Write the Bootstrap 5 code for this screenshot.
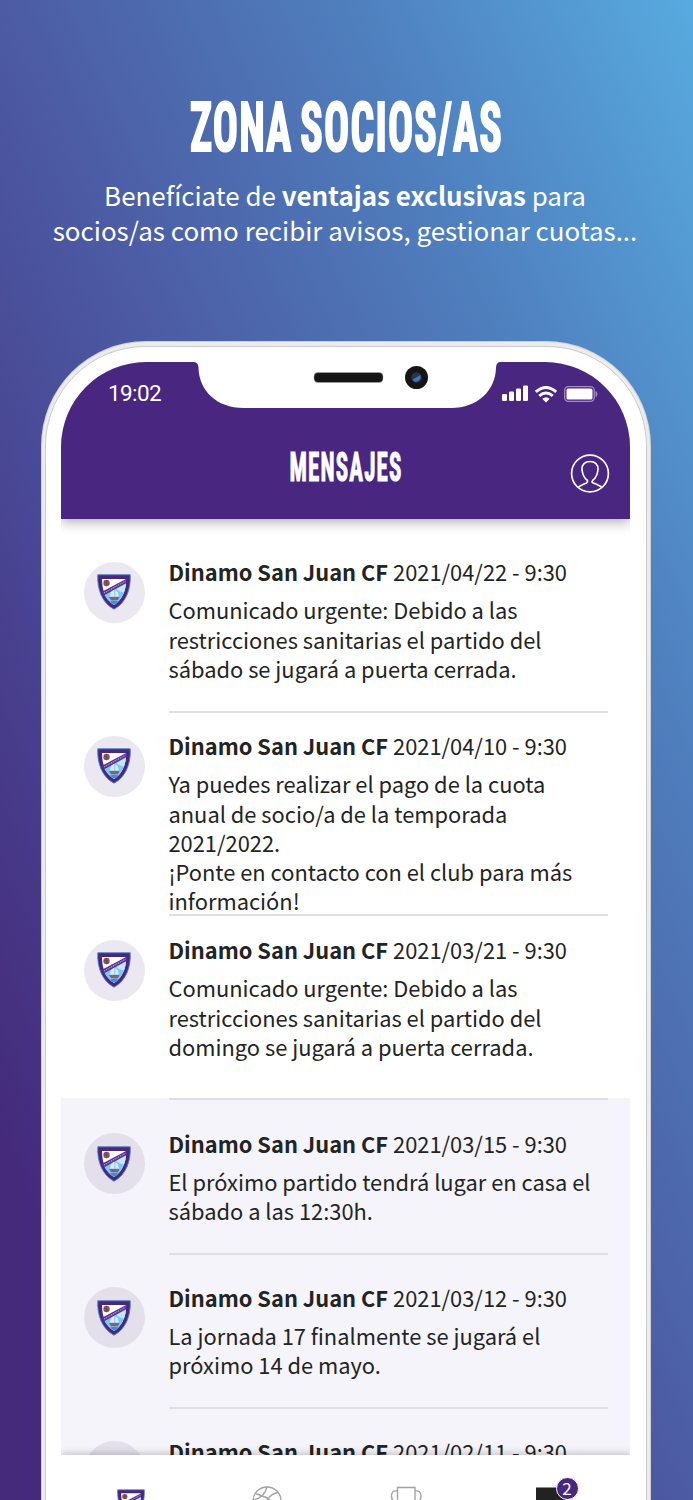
<!DOCTYPE html>
<html lang="es">
<head>
    <meta charset="UTF-8">
    <meta name="viewport" content="width=device-width, initial-scale=1.0">
    <title>Zona Socios/as</title>

    <!-- Bootstrap 5 CDN -->
    <link href="https://cdn.jsdelivr.net/npm/bootstrap@5.3.0/dist/css/bootstrap.min.css" rel="stylesheet">

    <style>
        body {
            margin: 0;
            font-family: "Noto Sans CJK SC", "Noto Sans", sans-serif;
            color: #222423;
        }
        .stage {
            height: 1500px;
            background: linear-gradient(to top right, #452a7b 0%, #452a7b 12%, #4c5ba4 50%, #4f7fbe 75%, #57aadf 100%);
        }
        .promo {
            height: 341px;
            padding-top: 90px;
        }
        .promo h1 {
            margin: 0;
            height: 88px;
        }
        .promo svg, .title-row svg {
            overflow: visible;
        }
        .condensed {
            font-family: Roboto, "Liberation Sans", sans-serif;
            font-weight: 700;
            font-stretch: 75%;
            letter-spacing: 2px;
            fill: #fff;
            stroke: #fff;
        }
        .promo p {
            padding-right: 3px;
            font-size: 25.95px;
            line-height: 34.5px;
        }
        .phone {
            width: 610px;
            height: 1400px;
            margin-left: 41px;
            padding: 1px;
            border-radius: 105px;
            background: #d0d0d0;
        }
        .phone-ring {
            padding: 4px 3px;
            border-radius: 104px;
            background: #ececec;
        }
        .phone-face {
            height: 1380px;
            padding: 15px 15px 0 14.5px;
            border: 1.5px solid #cbcbcb;
            border-radius: 100px;
            background: #fff;
        }
        .screen {
            width: 569px;
            height: 1138px;
            border-radius: 85px 85px 0 0;
        }
        .topbar {
            height: 157px;
            background: #49267f;
            box-shadow: 0 3px 12px rgba(0, 0, 0, .33);
            z-index: 2;
        }
        .notch {
            top: 0;
            left: 133px;
        }
        .clock {
            font-family: Roboto, sans-serif;
            font-size: 22.5px;
            line-height: 26px;
            letter-spacing: -.6px;
        }
        .status {
            height: 78px;
            padding: 18px 32px 0 47.5px;
        }
        .title-row {
            height: 79px;
        }
        .profile {
            top: 92px;
            right: 20px;
        }
        .msg {
            padding-left: 23px;
            gap: 24px;
        }
        .avatar-disc {
            width: 61px;
            height: 61px;
            margin-top: 4.5px;
            background: #ebe8f2;
        }
        .older {
            margin-top: -2px;
            padding-top: 2px;
            background: #f5f4fa;
        }
        .older .avatar-disc {
            background: #e3e0ec;
        }
        .msg-text {
            width: 439px;
            border-bottom: 2px solid #dfdfe2;
            font-size: 21.85px;
            line-height: 29.2px;
        }
        .msg-name {
            line-height: 30px;
            margin-bottom: 8.4px;
        }
        .m1 { height: 193.5px; padding-top: 38px; }
        .m2 { height: 203.5px; padding-top: 18.5px; }
        .m3 { height: 184px; padding-top: 19px; z-index: 1; }
        .m4 { height: 155px; padding-top: 28.5px; }
        .m5 { height: 154px; padding-top: 27.5px; }
        .feed {
            height: 936px;
        }
        .tabbar {
            height: 60px;
            background: #fff;
            box-shadow: 0 -2px 7px rgba(0, 0, 0, .2);
            z-index: 2;
        }
        .tabbar svg {
            display: block;
        }
        .count {
            top: 22px;
            left: 495px;
            width: 23px;
            height: 23px;
            border: 1px solid #fff;
            background: #49267f;
            font-size: 17px;
            line-height: 20.5px;
        }
    </style>
</head>
<body>

<!-- Club crest, reused by every message and the tab bar -->
<svg class="d-none">
    <symbol id="crest" viewBox="0 0 34 36">
        <path d="M.8.8H33.2C34 15 29 29 17 35.200C5 29 0 15 .8.8Z" fill="#49267f" stroke="#4b7fc0" stroke-width=".9"/>
        <path d="M5 5H29C29 17 25 26 17 31C9 26 5 17 5 5Z" fill="#fff"/>
        <path d="M29 9.500C28 19 24 26.500 17 31C12.500 28 9.500 25 7.300 20.800Z" fill="#7cc9f0"/>
        <path d="M29 9.500C28.700 13 28 15.500 27 18.500L22 17L19 14.800Z" fill="#c4e7f8"/>
        <path d="M4.500 18L30 4.500V8.800L6.800 21.600Z" fill="#56308f"/>
        <path d="M7 19L28.500 7.200" stroke="#b9a8d8" stroke-width="1.100" stroke-dasharray="1.300 .7"/>
        <circle cx="9.500" cy="9" r="3.200" fill="#8a5555"/>
        <path d="M7 7.700L11.800 10.400M9.500 6V12.200" stroke="#6b3a44" stroke-width=".6"/>
        <path d="M14 18L17.300 15.500V22.500H12.800ZM18.300 16L21 18.500L21.800 22.500H18.300Z" fill="#e3e6f5"/>
        <path d="M12 23H22.500L21 26.300H14Z" fill="#84607a"/>
        <path d="M13 27.700Q17 26 21.500 27.700L17 30.800Z" fill="#3d8fd0"/>
    </symbol>
</svg>

<div class="stage overflow-hidden">
    <header class="promo text-center text-white">
        <h1>
            <svg class="d-block mx-auto" width="320" height="80">
                <text class="condensed" x="3" y="61" font-size="69" stroke-width="2.200" textLength="313" lengthAdjust="spacingAndGlyphs">ZONA<tspan dx="-5"> </tspan>SOCIOS/AS</text>
            </svg>
        </h1>
        <p class="m-0">Benefíciate de <b>ventajas exclusivas</b> para<br>socios/as como recibir avisos, gestionar cuotas...</p>
    </header>

    <div class="phone">
        <div class="phone-ring">
            <div class="phone-face">
                <div class="screen position-relative overflow-hidden d-flex flex-column">

                    <!-- Status bar and title -->
                    <div class="topbar position-relative flex-shrink-0 text-white">
                        <svg class="notch position-absolute" width="306" height="47">
                            <path d="M0 0Q4.500 .5 4.500 6C5 28 22 46 50 46H257C284 46 301.500 28 302 6Q302 .5 306 0Z" fill="#fff"/>
                            <rect x="120" y="10.500" width="69" height="10" rx="4" fill="#151515" stroke="#aaa" stroke-width=".5"/>
                            <circle cx="222.500" cy="15.500" r="11.500" fill="#151515"/>
                            <circle cx="222.500" cy="15.500" r="5.200" fill="#26344f"/>
                            <path d="M218.500 17.500L226.500 13A5 5 0 0 1 220.500 19.500Z" fill="#4573b8"/>
                        </svg>
                        <div class="status d-flex justify-content-between">
                            <span class="clock">19:02</span>
                            <svg width="96" height="24" class="mt-1">
                                <g fill="#fff">
                                    <rect x="0" y="10" width="5" height="7" rx="1.300"/>
                                    <rect x="7" y="7.500" width="5" height="9.500" rx="1.300"/>
                                    <rect x="14" y="4.500" width="5" height="12.500" rx="1.300"/>
                                    <rect x="21" y="1.500" width="5" height="15.500" rx="1.300"/>
                                    <path d="M44 18.500L40.300 14.700Q44 11.700 47.700 14.700Z"/>
                                </g>
                                <path d="M37.300 11.800Q44 6.200 50.700 11.800M33.800 7.800Q44 -.8 54.200 7.800" fill="none" stroke="#fff" stroke-width="3"/>
                                <rect x="62.700" y="2.700" width="29.500" height="14.600" rx="3.500" fill="none" stroke="#a08fc0" stroke-width="1.300"/>
                                <rect x="64.500" y="4.500" width="26" height="11" rx="1.500" fill="#fff"/>
                                <path d="M94 7.500Q96 10 94 12.500Z" fill="#a08fc0" stroke="#a08fc0"/>
                            </svg>
                        </div>
                        <div class="title-row">
                            <svg class="d-block mx-auto" width="116" height="60">
                                <text class="condensed" x="2.500" y="41" font-size="41" stroke-width="1" textLength="113" lengthAdjust="spacingAndGlyphs">MENSAJES</text>
                            </svg>
                        </div>
                        <svg class="profile position-absolute" width="40" height="40" fill="none" stroke="#fff" stroke-width="1.700">
                            <circle cx="20" cy="19.500" r="18.400"/>
                            <path d="M8.500 33Q10.500 31.500 16 29.200Q18.500 28 17 26C13.500 23.500 12.500 20 12 15.500C11.700 10.500 15 7.500 20 7.500S28.300 10.500 28 15.500C27.500 20 26.500 23.500 23 26C21.500 28 21.500 28.500 24 29.200Q29.500 31.500 31.500 33"/>
                        </svg>
                    </div>

                    <!-- Messages -->
                    <div class="feed flex-shrink-0 overflow-hidden">
                        <div class="msg m1 d-flex">
                            <div class="avatar-disc rounded-circle flex-shrink-0 d-flex align-items-center justify-content-center"><svg width="34" height="36"><use href="#crest"/></svg></div>
                            <div class="msg-text">
                                <div class="msg-name"><b>Dinamo San Juan CF</b> 2021/04/22 - 9:30</div>
                                Comunicado urgente: Debido a las<br>restricciones sanitarias el partido del<br>sábado se jugará a puerta cerrada.
                            </div>
                        </div>
                        <div class="msg m2 d-flex">
                            <div class="avatar-disc rounded-circle flex-shrink-0 d-flex align-items-center justify-content-center"><svg width="34" height="36"><use href="#crest"/></svg></div>
                            <div class="msg-text">
                                <div class="msg-name"><b>Dinamo San Juan CF</b> 2021/04/10 - 9:30</div>
                                Ya puedes realizar el pago de la cuota<br>anual de socio/a de la temporada<br>2021/2022.<br>¡Ponte en contacto con el club para más<br>información!
                            </div>
                        </div>
                        <div class="msg m3 d-flex position-relative">
                            <div class="avatar-disc rounded-circle flex-shrink-0 d-flex align-items-center justify-content-center"><svg width="34" height="36"><use href="#crest"/></svg></div>
                            <div class="msg-text">
                                <div class="msg-name"><b>Dinamo San Juan CF</b> 2021/03/21 - 9:30</div>
                                Comunicado urgente: Debido a las<br>restricciones sanitarias el partido del<br>domingo se jugará a puerta cerrada.
                            </div>
                        </div>
                        <div class="older">
                            <div class="msg m4 d-flex">
                                <div class="avatar-disc rounded-circle flex-shrink-0 d-flex align-items-center justify-content-center"><svg width="34" height="36"><use href="#crest"/></svg></div>
                                <div class="msg-text">
                                    <div class="msg-name"><b>Dinamo San Juan CF</b> 2021/03/15 - 9:30</div>
                                    El próximo partido tendrá lugar en casa el<br>sábado a las 12:30h.
                                </div>
                            </div>
                            <div class="msg m5 d-flex">
                                <div class="avatar-disc rounded-circle flex-shrink-0 d-flex align-items-center justify-content-center"><svg width="34" height="36"><use href="#crest"/></svg></div>
                                <div class="msg-text">
                                    <div class="msg-name"><b>Dinamo San Juan CF</b> 2021/03/12 - 9:30</div>
                                    La jornada 17 finalmente se jugará el<br>próximo 14 de mayo.
                                </div>
                            </div>
                            <div class="msg m5 d-flex">
                                <div class="avatar-disc rounded-circle flex-shrink-0"></div>
                                <div class="msg-text">
                                    <div class="msg-name"><b>Dinamo San Juan CF</b> 2021/02/11 - 9:30</div>
                                </div>
                            </div>
                        </div>
                    </div>

                    <!-- Tab bar -->
                    <nav class="tabbar position-relative flex-shrink-0">
                        <svg width="569" height="60" fill="none" stroke="#a3a3a3" stroke-width="1.400">
                            <use href="#crest" x="56" y="34" width="28" height="30" stroke="none"/>
                            <circle cx="206" cy="46" r="14"/>
                            <path d="M206 32Q205 37 201 41Q197 44 192 45M195 39Q198 39.500 201 41Q207 42 211 48M217 37.500Q210 39 207 44Q205 47 204 50"/>
                            <path d="M336.500 60V32.500H354V60M336.500 36Q330.500 35 330.500 41T337 48M354 36Q360 35 360 41T353.500 48"/>
                            <rect x="475" y="32.500" width="30" height="30" fill="#222" stroke="none"/>
                        </svg>
                        <span class="count position-absolute rounded-circle text-white text-center">2</span>
                    </nav>
                </div>
            </div>
        </div>
    </div>
</div>

<!-- Bootstrap JS Bundle -->
<script src="https://cdn.jsdelivr.net/npm/bootstrap@5.3.0/dist/js/bootstrap.bundle.min.js"></script>
</body>
</html>
